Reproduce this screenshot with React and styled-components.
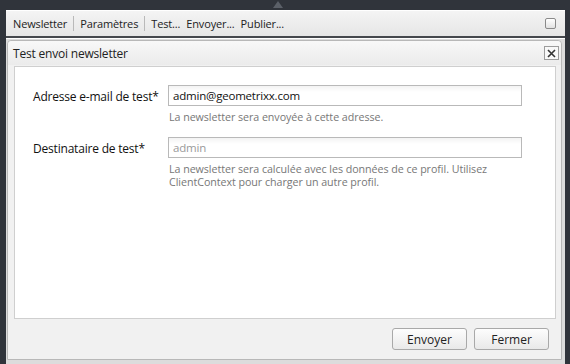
import React from 'react';
import styled, { createGlobalStyle } from 'styled-components';

const Global = createGlobalStyle`
  html, body { margin: 0; padding: 0; background: #30343b; }
  body { font-family: 'Open Sans', 'Noto Sans', sans-serif; }
`;

const App = () => {
  return (
    <Page>
      <Global />
      <TopBar>
        <Notch viewBox="0 0 12 8">
          <path d="M6 1 L11 8 L1 8 Z" fill="#5b6068" />
        </Notch>
      </TopBar>
      <Panel>
        <Toolbar>
          <Tab>Newsletter</Tab>
          <Sep />
          <Tab>Paramètres</Tab>
          <Sep />
          <Tab>Test...</Tab>
          <Tab>Envoyer...</Tab>
          <Tab>Publier...</Tab>
          <Spacer />
          <Check />
        </Toolbar>
        <Workspace>
          <Dialog>
            <Header>
              <Title>Test envoi newsletter</Title>
              <Close aria-label="close">
                <svg width="9" height="9" viewBox="0 0 9 9">
                  <path d="M1 1 L8 8 M8 1 L1 8" stroke="#333" strokeWidth="1.6" />
                </svg>
              </Close>
            </Header>
            <Body>
              <Row>
                <Label>Adresse e-mail de test*</Label>
                <Field>
                  <Input value="admin@geometrixx.com" readOnly />
                  <Help>La newsletter sera envoyée à cette adresse.</Help>
                </Field>
              </Row>
              <Row>
                <Label>Destinataire de test*</Label>
                <Field>
                  <Input value="admin" readOnly $muted />
                  <Help>
                    La newsletter sera calculée avec les données de ce profil. Utilisez
                    <br />
                    ClientContext pour charger un autre profil.
                  </Help>
                </Field>
              </Row>
            </Body>
            <Footer>
              <Button>Envoyer</Button>
              <Button>Fermer</Button>
            </Footer>
          </Dialog>
        </Workspace>
      </Panel>
    </Page>
  );
};

export default App;

const Page = styled.div`
  width: 570px;
  height: 364px;
  overflow: hidden;
  display: flex;
  flex-direction: column;
  background: #30343b;
`;

const TopBar = styled.div`
  height: 10px;
  flex: none;
  display: flex;
  justify-content: center;
  padding-right: 14px;
`;

const Notch = styled.svg`
  width: 12px;
  height: 8px;
`;

const Panel = styled.div`
  margin: 0 5px 0 6px;
  display: flex;
  flex-direction: column;
  flex: 1;
`;

const Toolbar = styled.div`
  height: 28px;
  flex: none;
  box-sizing: border-box;
  display: flex;
  align-items: center;
  padding: 0 9px 0 7px;
  background: linear-gradient(#f4f4f4, #e6e6e6);
  border-top: 1px solid #ffffff;
  border-bottom: 2px solid #45484d;
  gap: 6px;
`;

const Tab = styled.span`
  font-size: 11px;
  color: #222;
  letter-spacing: -0.15px;
`;

const Sep = styled.span`
  width: 1px;
  height: 15px;
  background: #b9b9b9;
`;

const Spacer = styled.div`
  flex: 1;
`;

const Check = styled.div`
  width: 9px;
  height: 9px;
  border: 1px solid #8a8a8a;
  border-radius: 2px;
  background: linear-gradient(#ffffff, #e2e2e2);
`;

const Workspace = styled.div`
  flex: 1;
  background: #dcdcdc;
  border-top: 1px solid #ffffff;
  padding: 1px 3px 0 1px;
  display: flex;
  align-items: flex-start;
`;

const Dialog = styled.div`
  flex: 1;
  height: 320px;
  box-sizing: border-box;
  border: 1px solid #b8b8b8;
  border-radius: 4px 4px 0 0;
  background: #f1f1f1;
  display: flex;
  flex-direction: column;
`;

const Header = styled.div`
  height: 24px;
  flex: none;
  display: flex;
  align-items: center;
  justify-content: space-between;
  padding: 0 2px 0 5px;
  background: linear-gradient(#f8f8f8, #ebebeb);
  border-radius: 4px 4px 0 0;
`;

const Title = styled.span`
  font-size: 12px;
  color: #222;
  letter-spacing: -0.2px;
`;

const Close = styled.div`
  width: 13px;
  height: 12px;
  border: 1px solid #9c9c9c;
  background: #f8f8f8;
  display: flex;
  align-items: center;
  justify-content: center;
`;

const Body = styled.div`
  height: 253px;
  flex: none;
  box-sizing: border-box;
  margin: 1px 5px 0 6px;
  background: #ffffff;
  border: 1px solid #cfcfcf;
  padding: 18px 0 0 18px;
  display: flex;
  flex-direction: column;
  gap: 13px;
`;

const Row = styled.div`
  display: flex;
  align-items: flex-start;
`;

const Label = styled.div`
  width: 135px;
  padding-top: 1px;
  font-size: 12px;
  line-height: 21px;
  color: #111;
  letter-spacing: -0.2px;
`;

const Field = styled.div`
  display: flex;
  flex-direction: column;
`;

const Input = styled.input`
  width: 354px;
  height: 21px;
  box-sizing: border-box;
  border: 1px solid #b9b9b9;
  background: linear-gradient(#f3f3f3, #ffffff 6px);
  padding: 0 4px;
  font-family: 'Open Sans', 'Noto Sans', sans-serif;
  font-size: 11.5px;
  letter-spacing: -0.2px;
  color: ${(p) => (p.$muted ? '#9a9a9a' : '#111')};
  outline: none;
`;

const Help = styled.div`
  padding: 5px 0 0 1px;
  font-size: 10.7px;
  line-height: 13px;
  color: #777;
  letter-spacing: -0.05px;
`;

const Footer = styled.div`
  flex: 1;
  display: flex;
  justify-content: flex-end;
  align-items: center;
  gap: 7px;
  padding: 0 12px 0 0;
`;

const Button = styled.button`
  width: 75px;
  height: 22px;
  border: 1px solid #a9a9a9;
  border-radius: 3px;
  background: linear-gradient(#fdfdfd, #e9e9e9);
  font-family: 'Open Sans', 'Noto Sans', sans-serif;
  font-size: 12px;
  color: #222;
  padding: 0;
`;
